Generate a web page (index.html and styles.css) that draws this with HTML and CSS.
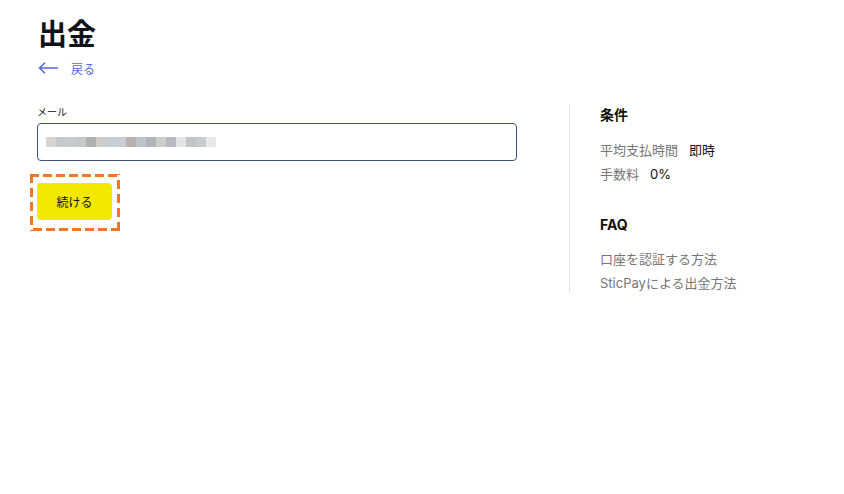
FILE: index.html
```html
<!DOCTYPE html>
<html lang="ja">
<head>
<meta charset="utf-8">
<title>出金</title>
<link rel="stylesheet" href="styles.css">
</head>
<body>
<div class="page">
  <h1 class="title">出金</h1>
  <a class="back" href="#">
    <svg class="back-icon" width="21" height="12" viewBox="0 0 21 12"><path d="M20 6H1.5M7 0.8L1.5 6L7 11.2" fill="none" stroke="currentColor" stroke-width="1.5"/></svg>
    <span>戻る</span>
  </a>
  <div class="main">
    <div class="form">
      <label class="label">メール</label>
      <div class="input">
        <div class="mosaic">
          <i style="background:#d8d4d4"></i><i style="background:#c5cacd"></i><i style="background:#c8cad0"></i><i style="background:#c4c8cd"></i><i style="background:#b1b1b3"></i><i style="background:#cdccc8"></i><i style="background:#c4ccd4"></i><i style="background:#c9ccd4"></i><i style="background:#b9b1ad"></i><i style="background:#bcc4cc"></i><i style="background:#b1b5b9"></i><i style="background:#cdcdcb"></i><i style="background:#b9b9c1"></i><i style="background:#e4e4e4"></i><i style="background:#c1c4c9"></i><i style="background:#c9cacd"></i><i style="background:#e8e8ea"></i>
        </div>
      </div>
      <div class="focus">
        <button class="btn">続ける</button>
      </div>
    </div>
    <aside class="side">
      <h2 class="side-title">条件</h2>
      <div class="row"><span class="muted">平均支払時間</span><span class="val">即時</span></div>
      <div class="row"><span class="muted">手数料</span><span class="val num">0%</span></div>
      <h2 class="side-title faq">FAQ</h2>
      <a class="link" href="#">口座を認証する方法</a>
      <a class="link" href="#">SticPayによる出金方法</a>
    </aside>
  </div>
</div>
</body>
</html>
```
FILE: styles.css
```css
* { box-sizing: border-box; }
html, body { margin: 0; background: #fff; }
body {
  font-family: Inter, "Noto Sans CJK JP", sans-serif;
  color: #111;
}
.page { padding: 14px 0 0 38px; }
.title {
  margin: 0;
  font-size: 29px;
  line-height: 42px;
  font-weight: 700;
  color: #111318;
}
.back {
  display: flex;
  align-items: center;
  gap: 12px;
  height: 24px;
  color: #5868d8;
  text-decoration: none;
  font-size: 12px;
}
.back-icon { display: block; }
.main {
  display: flex;
  margin-top: 24px;
}
.form {
  width: 480px;
  margin-left: -1px;
}
.label {
  display: block;
  font-size: 10px;
  line-height: 16px;
  color: #222;
  margin-bottom: 3px;
}
.input {
  height: 38px;
  border: 1px solid #3e5577;
  border-radius: 4px;
  display: flex;
  align-items: center;
  padding-left: 8px;
}
.mosaic { display: flex; }
.mosaic i { display: block; width: 10px; height: 10px; }
.focus {
  display: inline-block;
  margin-top: 13px;
  margin-left: -7px;
  padding: 9px 8px 11px 7px;
  background:
    repeating-linear-gradient(90deg, #ef7726 0 9px, transparent 9px 13px) left top / 100% 3px no-repeat,
    repeating-linear-gradient(270deg, #ef7726 0 9px, transparent 9px 13px) left bottom / 100% 3px no-repeat,
    repeating-linear-gradient(180deg, #ef7726 0 9px, transparent 9px 14px) left top / 3px 100% no-repeat,
    repeating-linear-gradient(0deg, #ef7726 0 9px, transparent 9px 14px) right top / 3px 100% no-repeat;
}
.btn {
  display: block;
  width: 75px;
  height: 37px;
  border: 0;
  border-radius: 4px;
  background: #f2e800;
  font-family: inherit;
  font-size: 12px;
  color: #111;
  padding: 0;
}
.side {
  margin-left: 52px;
  border-left: 1px solid #e6e6e6;
  padding-left: 30px;
  height: 189px;
  display: flex;
  flex-direction: column;
}
.side-title {
  margin: 0;
  font-size: 14px;
  line-height: 22px;
  font-weight: 700;
  color: #111;
}
.side-title.faq { margin-top: 28px; }
.row {
  display: flex;
  gap: 11px;
  font-size: 13px;
  line-height: 24px;
}
.side-title + .row { margin-top: 12px; }
.muted { color: #767676; }
.val { color: #111; }
.link {
  font-size: 13px;
  line-height: 24px;
  color: #767676;
  text-decoration: none;
}
.faq + .link { margin-top: 11px; }
```
